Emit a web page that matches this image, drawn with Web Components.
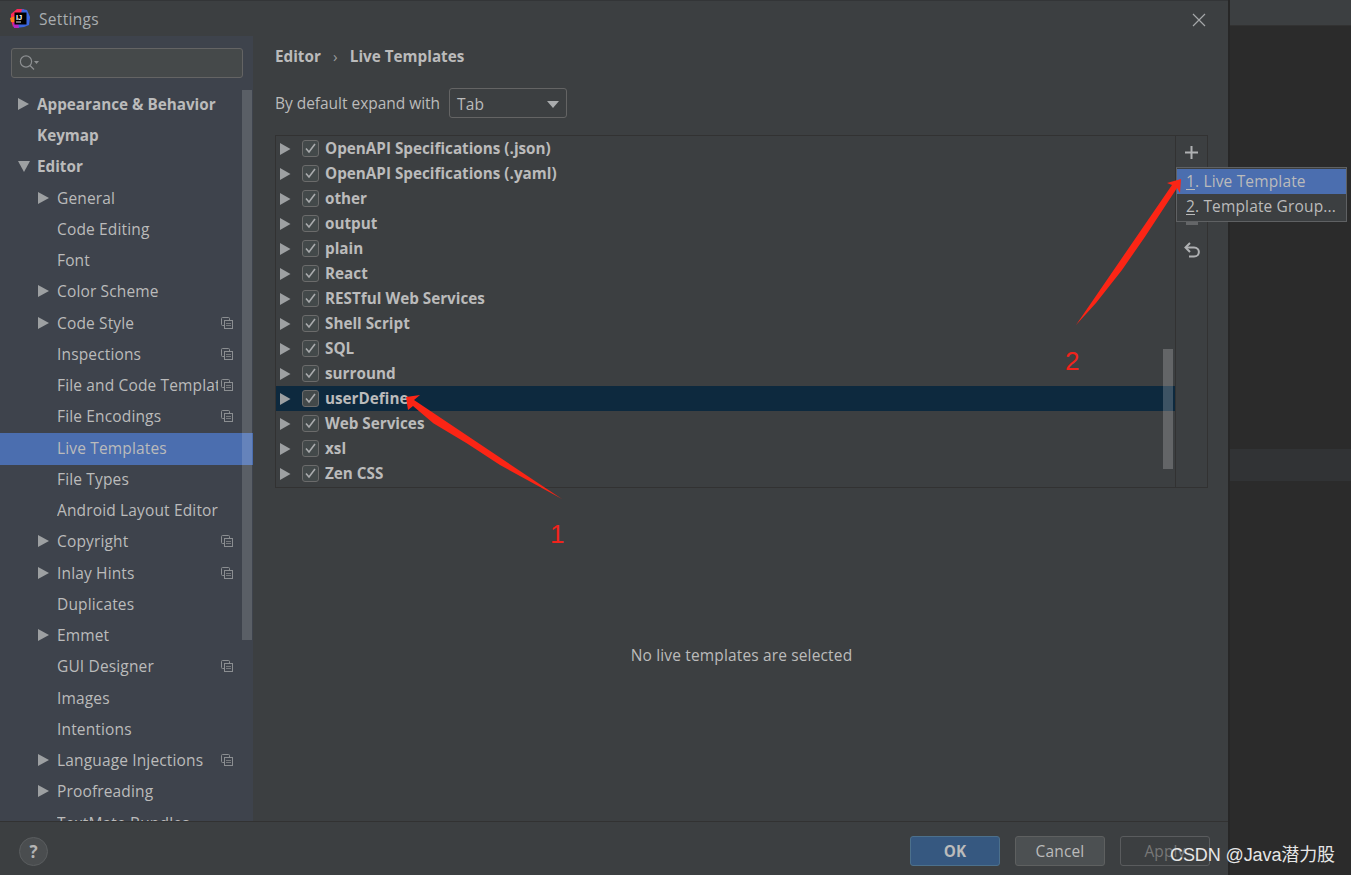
<!DOCTYPE html>
<html>
<head>
<meta charset="utf-8">
<title>Settings</title>
<style>
    html, body { margin: 0; height: 100%; overflow: hidden; background: #2b2b2b; }
    body { font-family: "Open Sans", "Liberation Sans", sans-serif; color: #bbbbbb; }
</style>
</head>
<body>
<ide-desktop>
    <settings-dialog>
        <settings-nav slot="nav">
            <nav-row label="Appearance &amp; Behavior" bold arrow="right"></nav-row>
            <nav-row label="Keymap" bold></nav-row>
            <nav-row label="Editor" bold arrow="down"></nav-row>
            <nav-row label="General" indent arrow="right"></nav-row>
            <nav-row label="Code Editing" indent></nav-row>
            <nav-row label="Font" indent></nav-row>
            <nav-row label="Color Scheme" indent arrow="right"></nav-row>
            <nav-row label="Code Style" indent arrow="right" copy></nav-row>
            <nav-row label="Inspections" indent copy></nav-row>
            <nav-row label="File and Code Templates" indent copy></nav-row>
            <nav-row label="File Encodings" indent copy></nav-row>
            <nav-row label="Live Templates" indent selected></nav-row>
            <nav-row label="File Types" indent></nav-row>
            <nav-row label="Android Layout Editor" indent></nav-row>
            <nav-row label="Copyright" indent arrow="right" copy></nav-row>
            <nav-row label="Inlay Hints" indent arrow="right" copy></nav-row>
            <nav-row label="Duplicates" indent></nav-row>
            <nav-row label="Emmet" indent arrow="right"></nav-row>
            <nav-row label="GUI Designer" indent copy></nav-row>
            <nav-row label="Images" indent></nav-row>
            <nav-row label="Intentions" indent></nav-row>
            <nav-row label="Language Injections" indent arrow="right" copy></nav-row>
            <nav-row label="Proofreading" indent arrow="right"></nav-row>
            <nav-row label="TextMate Bundles" indent></nav-row>
        </settings-nav>
        <template-pane slot="pane">
            <template-row label="OpenAPI Specifications (.json)"></template-row>
            <template-row label="OpenAPI Specifications (.yaml)"></template-row>
            <template-row label="other"></template-row>
            <template-row label="output"></template-row>
            <template-row label="plain"></template-row>
            <template-row label="React"></template-row>
            <template-row label="RESTful Web Services"></template-row>
            <template-row label="Shell Script"></template-row>
            <template-row label="SQL"></template-row>
            <template-row label="surround"></template-row>
            <template-row label="userDefine" selected></template-row>
            <template-row label="Web Services"></template-row>
            <template-row label="xsl"></template-row>
            <template-row label="Zen CSS"></template-row>
        </template-pane>
    </settings-dialog>
</ide-desktop>
<add-popup></add-popup>
<red-notes></red-notes>

<script>
class IdeDesktop extends HTMLElement {
    constructor() {
        super();
        this.attachShadow({ mode: 'open' });
    }

    connectedCallback() {
        this.shadowRoot.innerHTML = `
            <style>
                :host {
                    display: grid;
                    grid-template-columns: 1228px 1fr;
                    height: 875px;
                    background: #2b2b2b;
                }
                .back {
                    display: flex;
                    flex-direction: column;
                    border-left: 2px solid #272727;
                }
                .top { height: 25px; background: #3c3f41; border-bottom: 1px solid #323232; }
                .code { height: 423px; }
                .band { height: 32px; background: #313335; }
            </style>
            <slot></slot>
            <div class="back">
                <div class="top"></div>
                <div class="code"></div>
                <div class="band"></div>
            </div>
        `;
    }
}

class SettingsDialog extends HTMLElement {
    constructor() {
        super();
        this.attachShadow({ mode: 'open' });
    }

    connectedCallback() {
        this.shadowRoot.innerHTML = `
            <style>
                :host {
                    display: flex;
                    flex-direction: column;
                    height: 875px;
                    background: #3c3f41;
                }
                .title {
                    box-sizing: border-box;
                    height: 36px;
                    flex: none;
                    display: flex;
                    align-items: center;
                    padding: 0 22px 0 10px;
                    border-top: 1px solid #333537;
                    font-size: 15.5px;
                    letter-spacing: 0.3px;
                    color: #a9adb0;
                }
                .title svg.logo { width: 21px; height: 21px; margin-right: 8px; margin-top: -1px; }
                .title span { flex: 1; margin-top: 1px; }
                .title .close { margin-top: 2px; }
                .main { flex: 1; min-height: 0; display: flex; }
                .foot {
                    box-sizing: border-box;
                    height: 54px;
                    flex: none;
                    border-top: 1px solid #323232;
                    display: flex;
                    align-items: center;
                    padding: 5px 18px 0 19px;
                    gap: 15px;
                }
                .help {
                    box-sizing: border-box;
                    width: 29px;
                    height: 29px;
                    border-radius: 50%;
                    background: #4a4d4f;
                    border: 1px solid #5a5d5f;
                    display: flex;
                    align-items: center;
                    justify-content: center;
                    font-weight: 700;
                    font-size: 17px;
                    color: #b4b4b4;
                    margin-right: auto;
                }
            </style>
            <div class="title">
                <svg class="logo" viewBox="0 0 21 21">
                    <polygon points="1,6 7,1 14,1 10,12 3,19 1,12" fill="#fe2857"/>
                    <polygon points="0,10 5,8 6,14 1,14" fill="#fe7a16"/>
                    <polygon points="12,1 17,2 20,9 19,17 14,19 6,20 3,18 10,10" fill="#3a66e0"/>
                    <polygon points="3,15 8,14 9,20 4,20" fill="#b626c4"/>
                    <rect x="4.5" y="4.5" width="12" height="12" fill="#000"/>
                    <rect x="6" y="13.5" width="5" height="1" fill="#ddd"/>
                    <text x="6" y="11.5" font-family="Liberation Sans" font-weight="700" font-size="7.5" fill="#fff" letter-spacing="0">IJ</text>
                </svg>
                <span>Settings</span>
                <svg class="close" width="14" height="14" viewBox="0 0 14 14" stroke="#a5a7a9" stroke-width="1.2" fill="none">
                    <path d="M1 1 L13 13 M13 1 L1 13"/>
                </svg>
            </div>
            <div class="main">
                <slot name="nav"></slot>
                <slot name="pane"></slot>
            </div>
            <div class="foot">
                <div class="help">?</div>
                <ide-button primary>OK</ide-button>
                <ide-button>Cancel</ide-button>
                <ide-button disabled>Apply</ide-button>
            </div>
        `;
    }
}

class IdeButton extends HTMLElement {
    constructor() {
        super();
        this.attachShadow({ mode: 'open' });
    }

    connectedCallback() {
        this.shadowRoot.innerHTML = `
            <style>
                :host {
                    display: flex;
                    align-items: center;
                    justify-content: center;
                    box-sizing: border-box;
                    width: 90px;
                    height: 30px;
                    border: 1px solid #5e6060;
                    border-radius: 3px;
                    background: #4c5052;
                    font-size: 15.5px;
                    letter-spacing: 0.15px;
                    color: #bbbbbb;
                }
                :host([primary]) {
                    background: #365880;
                    border-color: #4c708c;
                    font-weight: 700;
                    font-size: 15.25px;
                    letter-spacing: 0;
                }
                :host([disabled]) {
                    background: transparent;
                    border-color: #5a5c5e;
                    color: #777777;
                }
            </style>
            <slot></slot>
        `;
    }
}

class SettingsNav extends HTMLElement {
    constructor() {
        super();
        this.attachShadow({ mode: 'open' });
    }

    connectedCallback() {
        this.shadowRoot.innerHTML = `
            <style>
                :host {
                    display: flex;
                    flex-direction: column;
                    width: 253px;
                    height: 785px;
                    flex: none;
                    overflow: hidden;
                    background: #3e434c;
                    position: relative;
                }
                .search {
                    box-sizing: border-box;
                    height: 30px;
                    margin: 12px 10px 0 11px;
                    background: #45494a;
                    border: 1px solid #646464;
                    border-radius: 3px;
                    display: flex;
                    align-items: center;
                    padding-left: 7px;
                    flex: none;
                }
                .list { padding-top: 11px; }
                .thumb {
                    position: absolute;
                    right: 1px;
                    top: 54px;
                    width: 10px;
                    height: 550px;
                    background: rgba(255, 255, 255, 0.15);
                }
            </style>
            <div class="search">
                <svg width="20" height="18" viewBox="0 0 20 18" fill="none" stroke="#8c8f91" stroke-width="1.2">
                    <circle cx="7" cy="7.5" r="5.6"/>
                    <path d="M11 11.5 L15 15.5"/>
                    <polygon points="15,7 20,7 17.5,10" fill="#8c8f91" stroke="none"/>
                </svg>
            </div>
            <div class="list"><slot></slot></div>
            <div class="thumb"></div>
        `;
    }
}

class NavRow extends HTMLElement {
    constructor() {
        super();
        this.attachShadow({ mode: 'open' });
    }

    connectedCallback() {
        const arrow = this.getAttribute('arrow');
        const arrows = {
            right: '<polygon points="0,0 11,6 0,12" fill="#9da0a2"/>',
            down: '<polygon points="0,1 12,1 6,12" fill="#9da0a2"/>'
        };
        this.shadowRoot.innerHTML = `
            <style>
                :host {
                    display: flex;
                    align-items: center;
                    box-sizing: border-box;
                    height: 31.25px;
                    padding-left: 18px;
                    padding-bottom: 1.5px;
                    font-size: 15.5px;
                    letter-spacing: 0.15px;
                    color: #bbbbbb;
                    white-space: nowrap;
                }
                :host([bold]) { font-weight: 700; font-size: 15.25px; letter-spacing: 0; }
                :host([indent]) { padding-left: 38px; }
                :host([selected]) { background: #4b6eaf; box-shadow: 0 1px 0 #4b6eaf; }
                .arrow { width: 12px; height: 12px; flex: none; margin-right: 7px; }
                .spot { width: 12px; flex: none; margin-right: 7px; }
                .label { width: 161px; overflow: hidden; flex: none; }
                :host(:not([indent])) .label { width: 183px; }
                .copy { flex: none; margin-left: 3px; }
            </style>
            ${arrow ? `<svg class="arrow" viewBox="0 0 12 12">${arrows[arrow]}</svg>` : '<span class="spot"></span>'}
            <span class="label">${this.getAttribute('label')}</span>
            ${this.hasAttribute('copy') ? `
                <svg class="copy" width="12" height="12" viewBox="0 0 12 12" fill="none" stroke="#8b8e91">
                    <rect x="0.5" y="0.5" width="8" height="8" rx="1"/>
                    <rect x="3.5" y="3.5" width="8" height="8" fill="#3e434c"/>
                    <path d="M5 6.5 H10 M5 8.5 H10" stroke="#777a7d"/>
                </svg>` : ''}
        `;
    }
}

class TemplatePane extends HTMLElement {
    constructor() {
        super();
        this.attachShadow({ mode: 'open' });
    }

    connectedCallback() {
        this.shadowRoot.innerHTML = `
            <style>
                :host {
                    flex: 1;
                    min-width: 0;
                    display: flex;
                    flex-direction: column;
                    padding: 0 20px 0 22px;
                    font-size: 15.5px;
                    letter-spacing: 0.15px;
                    color: #bbbbbb;
                }
                .crumbs {
                    display: flex;
                    align-items: center;
                    height: 24px;
                    margin-top: 8px;
                    font-weight: 700;
                    font-size: 15.25px;
                    letter-spacing: 0;
                }
                .crumbs i {
                    font-style: normal;
                    font-weight: 400;
                    width: 29px;
                    text-align: center;
                    color: #9a9c9e;
                }
                .expand {
                    display: flex;
                    align-items: center;
                    gap: 9px;
                    height: 30px;
                    margin-top: 20px;
                }
                .expand > span { margin-bottom: 1px; letter-spacing: -0.03px; }
                .combo {
                    box-sizing: border-box;
                    width: 118px;
                    height: 30px;
                    border: 1px solid #646464;
                    border-radius: 3px;
                    display: flex;
                    align-items: center;
                    justify-content: space-between;
                    padding: 2px 7px 0 7px;
                }
                .table {
                    display: flex;
                    height: 353px;
                    box-sizing: border-box;
                    margin-top: 17px;
                    border: 1px solid #323232;
                }
                .rows { flex: 1; min-width: 0; position: relative; overflow: hidden; }
                .thumb {
                    position: absolute;
                    right: 2px;
                    top: 213px;
                    width: 10px;
                    height: 120px;
                    background: rgba(255, 255, 255, 0.2);
                }
                .tools {
                    width: 31px;
                    flex: none;
                    border-left: 1px solid #323232;
                    display: flex;
                    flex-direction: column;
                    align-items: center;
                    padding-top: 10px;
                }
                .tools svg { display: block; }
                .hidden-tool {
                    width: 12px;
                    height: 20px;
                    margin: 46px 0 17px 0;
                    background: #646668;
                }
                .empty {
                    flex: 1;
                    display: flex;
                    align-items: center;
                    justify-content: center;
                }
            </style>
            <div class="crumbs">Editor<i>›</i>Live Templates</div>
            <div class="expand">
                <span>By default expand with</span>
                <div class="combo">
                    <span>Tab</span>
                    <svg width="12" height="7" viewBox="0 0 12 7"><polygon points="0,0 12,0 6,7" fill="#a9abad"/></svg>
                </div>
            </div>
            <div class="table">
                <div class="rows">
                    <slot></slot>
                    <div class="thumb"></div>
                </div>
                <div class="tools">
                    <svg width="13" height="13" viewBox="0 0 13 13"><path d="M6.5 0 V13 M0 6.5 H13" stroke="#afb1b3" stroke-width="2"/></svg>
                    <div class="hidden-tool"></div>
                    <svg width="16" height="16" viewBox="0 0 16 16" fill="none" stroke="#afb1b3" stroke-width="2"><path d="M2 5.5 H10 C16.5 5.5 16.5 14.5 10 14.5 H5"/><path d="M6 1 L1.5 5.5 L6 10"/></svg>
                </div>
            </div>
            <div class="empty">No live templates are selected</div>
        `;
    }
}

class TemplateRow extends HTMLElement {
    constructor() {
        super();
        this.attachShadow({ mode: 'open' });
    }

    connectedCallback() {
        this.shadowRoot.innerHTML = `
            <style>
                :host {
                    display: flex;
                    align-items: center;
                    height: 25px;
                    padding-left: 4px;
                    font-weight: 700;
                    font-size: 15.25px;
                    letter-spacing: 0;
                    white-space: nowrap;
                }
                :host([selected]) { background: #0d293e; }
                .arrow { flex: none; margin-right: 11px; }
                .box {
                    box-sizing: border-box;
                    flex: none;
                    width: 17px;
                    height: 17px;
                    border: 1px solid #6b6b6b;
                    border-radius: 3px;
                    background: #43494a;
                    margin-right: 6px;
                }
                .box svg { display: block; }
                .label { margin-top: -2px; }
            </style>
            <svg class="arrow" width="11" height="12" viewBox="0 0 11 12"><polygon points="0,0 10.5,6 0,12" fill="#9da0a2"/></svg>
            <div class="box">
                <svg width="15" height="15" viewBox="0 0 15 15" fill="none" stroke="#a9abad" stroke-width="1.6"><path d="M3 7.5 L6 11 L12 3"/></svg>
            </div>
            <span class="label">${this.getAttribute('label')}</span>
        `;
    }
}

class AddPopup extends HTMLElement {
    constructor() {
        super();
        this.attachShadow({ mode: 'open' });
    }

    connectedCallback() {
        this.shadowRoot.innerHTML = `
            <style>
                :host {
                    position: absolute;
                    left: 1176px;
                    top: 167px;
                    width: 171px;
                    box-sizing: border-box;
                    border: 1px solid #5f6163;
                    padding: 1px 0 2px;
                    background: #3c3f41;
                    font-size: 15.5px;
                    letter-spacing: 0.15px;
                    color: #bbbbbb;
                    white-space: nowrap;
                }
                div { height: 25px; box-sizing: border-box; display: flex; align-items: center; padding: 0 0 2px 9px; }
                .on { background: #4b6eaf; }
                u { text-underline-offset: 2px; }
            </style>
            <div class="on"><span><u>1</u>. Live Template</span></div>
            <div><span><u>2</u>. Template Group...</span></div>
        `;
    }
}

class RedNotes extends HTMLElement {
    constructor() {
        super();
        this.attachShadow({ mode: 'open' });
    }

    connectedCallback() {
        this.shadowRoot.innerHTML = `
            <style>
                :host { position: absolute; left: 0; top: 0; width: 1351px; height: 875px; pointer-events: none; }
                svg { position: absolute; left: 0; top: 0; }
                span { position: absolute; color: #f0231c; font: 26px/30px "Liberation Sans", sans-serif; }
                .mark {
                    left: 1170px;
                    top: 844px;
                    color: #e6e6e6;
                    font: 18px/22px "Liberation Sans", "Noto Sans CJK SC", sans-serif;
                    letter-spacing: -0.1px;
                    white-space: nowrap;
                }
            </style>
            <svg width="1351" height="875" viewBox="0 0 1351 875">
                <polygon points="406,397 420,395 414,400 562,499 500,465 466.7,443.3 433.3,423.3 413,406 408,410" fill="#fb2515"/>
                <polygon points="1181,179 1180,193 1177,188 1145,236.7 1122,270 1096,303 1076,325 1172,185 1167,183" fill="#fb2515"/>
            </svg>
            <span style="left:550px;top:519px">1</span>
            <span style="left:1065px;top:346px">2</span>
            <span class="mark">CSDN @Java潜力股</span>
        `;
    }
}

customElements.define('ide-desktop', IdeDesktop);
customElements.define('settings-dialog', SettingsDialog);
customElements.define('ide-button', IdeButton);
customElements.define('settings-nav', SettingsNav);
customElements.define('nav-row', NavRow);
customElements.define('template-pane', TemplatePane);
customElements.define('template-row', TemplateRow);
customElements.define('add-popup', AddPopup);
customElements.define('red-notes', RedNotes);
</script>
</body>
</html>
